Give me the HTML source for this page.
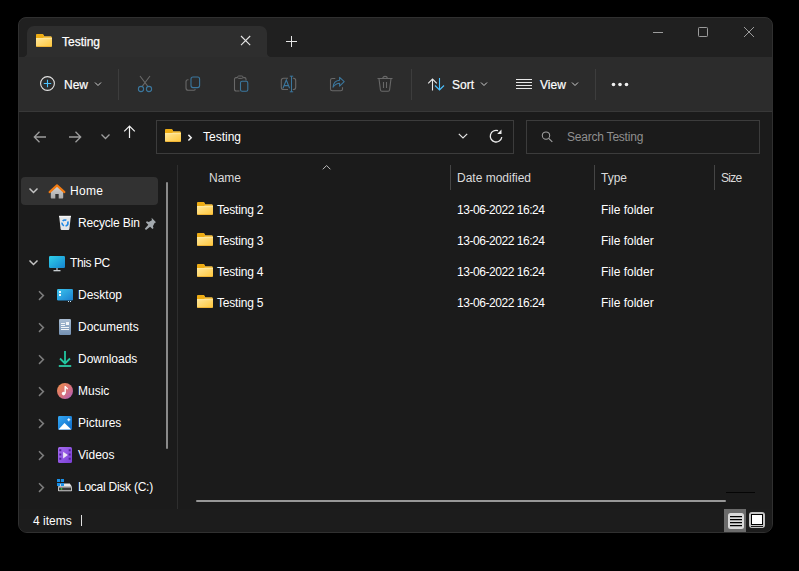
<!DOCTYPE html>
<html><head><meta charset="utf-8">
<style>
*{margin:0;padding:0;box-sizing:border-box}
html,body{width:799px;height:571px;overflow:hidden;background:#000}
body{font-family:"Liberation Sans",sans-serif;font-size:12px;color:#fff;position:relative}
.a{position:absolute}
svg.a{overflow:visible}
.t{position:absolute;white-space:nowrap;line-height:14px}
.nv{color:#fff}
.hd{color:#dcdcdc}
.sb{-webkit-text-stroke:.2px #fff}
</style></head><body>
<svg width="0" height="0" style="position:absolute">
<defs>
<linearGradient id="fg" x1="0" y1="0" x2="1" y2="1">
<stop offset="0" stop-color="#ffe79a"/><stop offset="1" stop-color="#ffc63a"/>
</linearGradient>
<symbol id="folder" viewBox="0 0 16 13">
<path d="M1.6 0h4.5c.5 0 .8.2 1.1.5L8.2 2.2h6.2c.9 0 1.6.7 1.6 1.6V6H0V1.6C0 .7.7 0 1.6 0z" fill="#f6c244"/>
<path d="M1.6 0h4.5c.5 0 .8.2 1.1.5L8.2 2.2 7 4.2H0V1.6C0 .7.7 0 1.6 0z" fill="#eeac12"/>
<path d="M0 4.2h16v7.2c0 .9-.7 1.6-1.6 1.6H1.6C.7 13 0 12.3 0 11.4z" fill="url(#fg)"/>
<path d="M0 4.2h16v.9H0z" fill="#fff0b8" opacity=".75"/>
<path d="M.2 12.1h15.6c-.3.6-.8.9-1.4.9H1.6c-.6 0-1.1-.3-1.4-.9z" fill="#f0b435"/>
</symbol>
</defs>
</svg>

<!-- window -->
<div class="a" style="left:18px;top:17px;width:755px;height:516px;border-radius:8px 8px 9px 9px;background:#202020;border:1px solid #303030"></div>
<!-- tab -->
<div class="a" style="left:27px;top:26px;width:240px;height:31px;background:#2e2e2e;border-radius:7px 7px 0 0"></div>
<div class="a" style="left:23px;top:53px;width:4px;height:4px;background:radial-gradient(circle at 0 0,#202020 3.6px,#2e2e2e 4.4px)"></div>
<div class="a" style="left:267px;top:53px;width:4px;height:4px;background:radial-gradient(circle at 100% 0,#202020 3.6px,#2e2e2e 4.4px)"></div>
<!-- command bar -->
<div class="a" style="left:19px;top:57px;width:753px;height:54px;background:#2c2c2c"></div>
<div class="a" style="left:19px;top:111px;width:753px;height:1px;background:#383838"></div>
<!-- main content -->
<div class="a" style="left:19px;top:112px;width:753px;height:397px;background:#1b1b1b"></div>
<!-- status bar -->
<div class="a" style="left:19px;top:509px;width:753px;height:23px;background:#1c1c1c;border-radius:0 0 8px 8px"></div>

<!-- ===== title bar ===== -->
<svg class="a" style="left:36px;top:34px" width="16" height="13"><use href="#folder"/></svg>
<div class="t" style="left:62px;top:35px;-webkit-text-stroke:.25px #fff">Testing</div>
<svg class="a" style="left:240px;top:35px" width="12" height="12"><path d="M1 1l9.2 9.2M10.2 1L1 10.2" stroke="#e6e6e6" stroke-width="1.1"/></svg>
<svg class="a" style="left:286px;top:36px" width="12" height="12"><path d="M5.5 0v11M0 5.5h11" stroke="#e6e6e6" stroke-width="1"/></svg>
<!-- window controls -->
<svg class="a" style="left:652px;top:26px" width="12" height="12"><path d="M1 6.5h10" stroke="#9c9c9c" stroke-width="1"/></svg>
<svg class="a" style="left:697px;top:26px" width="12" height="12"><rect x="1.5" y="1.5" width="9" height="9" rx=".8" fill="none" stroke="#9c9c9c" stroke-width="1"/></svg>
<svg class="a" style="left:743px;top:26px" width="12" height="12"><path d="M1 1l10 10M11 1L1 11" stroke="#9c9c9c" stroke-width="1"/></svg>

<!-- ===== command bar ===== -->
<svg class="a" style="left:39px;top:75px" width="17" height="17"><circle cx="8.5" cy="8.5" r="6.9" fill="none" stroke="#e4e4e4" stroke-width="1.1"/><path d="M8.5 4.8v7.4M4.8 8.5h7.4" stroke="#4cc2ff" stroke-width="1.1"/></svg>
<div class="t sb" style="left:64px;top:78px">New</div>
<svg class="a" style="left:94px;top:81px" width="8" height="6"><path d="M1 1.5l3 3 3-3" fill="none" stroke="#cfcfcf" stroke-width="1"/></svg>
<div class="a" style="left:118px;top:69px;width:1px;height:31px;background:#3d3d3d"></div>
<!-- cut -->
<svg class="a" style="left:136px;top:75px" width="18" height="18"><path d="M4 1l8.2 10.8M14 1L5.8 11.8" stroke="#686868" stroke-width="1.1" fill="none"/><circle cx="5" cy="14" r="2.6" fill="none" stroke="#3b779e" stroke-width="1.1"/><circle cx="13" cy="14" r="2.6" fill="none" stroke="#3b779e" stroke-width="1.1"/></svg>
<!-- copy -->
<svg class="a" style="left:184px;top:75px" width="18" height="18"><path d="M4.5 4.8H4c-1 0-2 .9-2 2V13c0 1.3 1 2.3 2.3 2.3h5.5c.8 0 1.4-.5 1.6-1" fill="none" stroke="#686868" stroke-width="1.1"/><rect x="7" y="2" width="8.6" height="10.6" rx="2" fill="none" stroke="#3b779e" stroke-width="1.1"/></svg>
<!-- paste -->
<svg class="a" style="left:232px;top:75px" width="18" height="18"><path d="M7.5 16H4.2C3 16 2.5 15.3 2.5 14.3V4.2C2.5 3.2 3.2 2.6 4 2.6h1.3M11.2 2.6h1.2c.9 0 1.6.6 1.6 1.5v1.3" fill="none" stroke="#686868" stroke-width="1.1"/><path d="M5.5 2.2c0-.7.5-1.2 1.2-1.2h3.2c.7 0 1.2.5 1.2 1.2s-.5 1.2-1.2 1.2H6.7c-.7 0-1.2-.5-1.2-1.2z" fill="none" stroke="#686868" stroke-width="1"/><rect x="8.5" y="6.3" width="7.3" height="10" rx="1.6" fill="none" stroke="#3b779e" stroke-width="1.1"/></svg>
<!-- rename -->
<svg class="a" style="left:280px;top:75px" width="18" height="18"><path d="M8 14.5H3.6C2.2 14.5 1.3 13.5 1.3 12.2V5.5C1.3 4.2 2.2 3.2 3.6 3.2H8M12.8 3.2h.6c1.3 0 2.3 1 2.3 2.3v6.7c0 1.3-1 2.3-2.3 2.3h-.6" fill="none" stroke="#686868" stroke-width="1.1"/><path d="M3 13.3L6.3 5l3.3 8.3M4.2 10.6h4.2" fill="none" stroke="#3b779e" stroke-width="1.05"/><path d="M11.5 1.2v15.6M9.8 1.2h3.4M9.8 16.8h3.4" fill="none" stroke="#3b779e" stroke-width="1"/></svg>
<!-- share -->
<svg class="a" style="left:328px;top:75px" width="18" height="18"><path d="M7.3 3.5H4.3c-1.1 0-1.8.7-1.8 1.8v8.6c0 1.1.7 1.8 1.8 1.8h8.4c1.1 0 1.8-.7 1.8-1.8v-1.6" fill="none" stroke="#686868" stroke-width="1.1"/><path d="M5 12.2C5.4 8 8 5.6 11.6 5.3V2.3l4.6 4.4-4.6 4.5V8.3C9 8.3 6.8 9.8 5 12.2z" fill="none" stroke="#3b779e" stroke-width="1.05" stroke-linejoin="round"/></svg>
<!-- delete -->
<svg class="a" style="left:376px;top:75px" width="18" height="18"><path d="M1.5 3.5h15M6.8 3.3c0-1 .9-1.9 2.2-1.9s2.2.9 2.2 1.9M3 3.8l1.4 11c.1.8.7 1.4 1.5 1.4h6.2c.8 0 1.4-.6 1.5-1.4l1.4-11M7.5 7v6M10.5 7v6" fill="none" stroke="#686868" stroke-width="1.1"/></svg>
<div class="a" style="left:411px;top:69px;width:1px;height:31px;background:#3d3d3d"></div>
<!-- sort -->
<svg class="a" style="left:426px;top:75px" width="20" height="18"><path d="M6.5 15.5V4M2.2 8.3l4.3-4.3 4.3 4.3" fill="none" stroke="#e8e8e8" stroke-width="1.1"/><path d="M13.5 3v11.8M9 10.5l4.5 4.5 4.5-4.5" fill="none" stroke="#4cc2ff" stroke-width="1.1"/></svg>
<div class="t sb" style="left:452px;top:78px">Sort</div>
<svg class="a" style="left:480px;top:81px" width="8" height="6"><path d="M1 1.5l3 3 3-3" fill="none" stroke="#cfcfcf" stroke-width="1"/></svg>
<!-- view -->
<svg class="a" style="left:515px;top:77px" width="18" height="14"><path d="M1 2.5h16M1 5.5h16M1 8.5h16M1 11.5h16" stroke="#e8e8e8" stroke-width="1"/></svg>
<div class="t sb" style="left:540px;top:78px">View</div>
<svg class="a" style="left:571px;top:81px" width="8" height="6"><path d="M1 1.5l3 3 3-3" fill="none" stroke="#cfcfcf" stroke-width="1"/></svg>
<div class="a" style="left:595px;top:69px;width:1px;height:31px;background:#3d3d3d"></div>
<!-- more -->
<svg class="a" style="left:610px;top:80px" width="20" height="8"><circle cx="3.5" cy="4.5" r="1.8" fill="#f0f0f0"/><circle cx="10" cy="4.5" r="1.8" fill="#f0f0f0"/><circle cx="16.5" cy="4.5" r="1.8" fill="#f0f0f0"/></svg>

<!-- ===== nav row ===== -->
<svg class="a" style="left:32px;top:129px" width="16" height="16"><path d="M14 8H2.5M7.5 2.8L2.3 8l5.2 5.2" fill="none" stroke="#9d9d9d" stroke-width="1.3"/></svg>
<svg class="a" style="left:67px;top:129px" width="16" height="16"><path d="M2 8h11.5M8.5 2.8L13.7 8l-5.2 5.2" fill="none" stroke="#9d9d9d" stroke-width="1.3"/></svg>
<svg class="a" style="left:100px;top:132px" width="12" height="9"><path d="M1.5 2.5l4 4 4-4" fill="none" stroke="#9d9d9d" stroke-width="1.3"/></svg>
<svg class="a" style="left:122px;top:124px" width="16" height="16"><path d="M7.5 14V2.5M2.2 7.3L7.5 2l5.3 5.3" fill="none" stroke="#f2f2f2" stroke-width="1.2"/></svg>
<!-- address box -->
<div class="a" style="left:156px;top:120px;width:358px;height:34px;border:1px solid #3c3c3c;background:#1b1b1b"></div>
<svg class="a" style="left:165px;top:129px" width="16" height="13"><use href="#folder"/></svg>
<svg class="a" style="left:186px;top:133px" width="8" height="9"><path d="M2.4 1.9l2.8 2.8-2.8 2.8" fill="none" stroke="#f0f0f0" stroke-width="1.5"/></svg>
<div class="t" style="left:203px;top:130px">Testing</div>
<svg class="a" style="left:457px;top:132px" width="12" height="8"><path d="M1.8 1.8l4.2 4.2 4.2-4.2" fill="none" stroke="#e6e6e6" stroke-width="1.2"/></svg>
<svg class="a" style="left:488px;top:128px" width="16" height="16"><path d="M13.8 9.2A5.8 5.8 0 1 1 10 2.7" fill="none" stroke="#ececec" stroke-width="1.3"/><path d="M13.5 1.6v4.3H9.2z" fill="#ececec"/></svg>
<!-- search box -->
<div class="a" style="left:526px;top:120px;width:234px;height:34px;border:1px solid #3c3c3c;background:#1b1b1b"></div>
<svg class="a" style="left:540px;top:130px" width="14" height="14"><circle cx="6" cy="5.6" r="3.7" fill="none" stroke="#a0a0a0" stroke-width="1.05"/><path d="M8.7 8.3l3.6 3.6" stroke="#a0a0a0" stroke-width="1.1"/></svg>
<div class="t" style="left:567px;top:130px;color:#8f8f8f;letter-spacing:-.22px">Search Testing</div>

<!-- ===== navigation pane ===== -->
<div class="a" style="left:21px;top:177px;width:137px;height:28px;background:#323232;border-radius:4px"></div>
<div class="a" style="left:166px;top:182px;width:2px;height:267px;background:#8a8a8a;border-radius:1px"></div>
<div class="a" style="left:177px;top:165px;width:1px;height:344px;background:#2e2e2e"></div>

<svg class="a" style="left:28px;top:186px" width="12" height="9"><path d="M1.5 2.5l4 4 4-4" fill="none" stroke="#c4c4c4" stroke-width="1.5"/></svg>
<!-- home icon -->
<svg class="a" style="left:48px;top:183px" width="18" height="17"><defs><linearGradient id="hg" x1="0" y1="0" x2="0" y2="1"><stop offset="0" stop-color="#d4d4d4"/><stop offset="1" stop-color="#a8a8a8"/></linearGradient></defs><path d="M2.8 8.3v6.2c0 .7.4 1 1 1h3.5v-4.6h3.4v4.6h3.5c.6 0 1-.3 1-1V8.3L9 3z" fill="url(#hg)"/><path d="M1.6 9.1L9 2.4l7.4 6.7" fill="none" stroke="#f27b12" stroke-width="2.1" stroke-linejoin="round" stroke-linecap="round"/></svg>
<div class="t" style="left:70px;top:184px;letter-spacing:.3px">Home</div>

<!-- recycle bin -->
<svg class="a" style="left:58px;top:215px" width="14" height="16"><path d="M1.2 1.5h11.6l-1.4 12.6c-.1.6-.5 1-1.1 1H3.7c-.6 0-1-.4-1.1-1z" fill="#e4e6e8"/><path d="M1 1.5h12" stroke="#f6f6f6" stroke-width="1.4"/><circle cx="7" cy="8" r="3" fill="none" stroke="#1e88e5" stroke-width="1.6" stroke-dasharray="4 1.6"/></svg>
<div class="t" style="left:78px;top:216px;letter-spacing:-.15px">Recycle Bin</div>
<svg class="a" style="left:143px;top:217px" width="14" height="13"><path d="M8.6 0.8l4.4 4.4-1.4 .9-1.7 3.1 .6 1.9-1 1-2.4-2.4L3 13 1.8 11.8 5.3 7.7 2.9 5.3l1-1 1.9.6 3.1-1.7z" fill="#a3a9ae"/></svg>

<svg class="a" style="left:28px;top:258px" width="12" height="9"><path d="M1.5 2.5l4 4 4-4" fill="none" stroke="#c4c4c4" stroke-width="1.5"/></svg>
<!-- monitor -->
<svg class="a" style="left:48px;top:255px" width="18" height="17"><defs><linearGradient id="mg" x1="0" y1="0" x2="1" y2="1"><stop offset="0" stop-color="#2fd0ea"/><stop offset="1" stop-color="#1584cf"/></linearGradient></defs><rect x="1" y="1" width="16" height="12" rx="1.2" fill="url(#mg)"/><path d="M8.2 13h1.6v2.2H8.2z" fill="#9aa4ac"/><path d="M5.5 15h7v1.3h-7z" fill="#c7ccd0"/></svg>
<div class="t" style="left:70px;top:256px;letter-spacing:-.4px">This PC</div>

<svg class="a" style="left:36px;top:289px" width="9" height="12"><path d="M3 2.3l4.4 4.3-4.4 4.3" fill="none" stroke="#7c7c7c" stroke-width="1.5"/></svg>
<!-- desktop -->
<svg class="a" style="left:56px;top:288px" width="18" height="14"><defs><linearGradient id="dg" x1="0" y1="0" x2="1" y2="1"><stop offset="0" stop-color="#3cc4ec"/><stop offset="1" stop-color="#1a7fd0"/></linearGradient></defs><rect x="1" y="1" width="16" height="11.5" rx="1.3" fill="url(#dg)"/><rect x="3" y="3" width="2" height="2" fill="#f0f9ff"/><rect x="3" y="6" width="2" height="2" fill="#f0f9ff"/><rect x="12" y="13" width="1" height="1" fill="#c8e6f6"/><rect x="14" y="13" width="1" height="1" fill="#c8e6f6"/></svg>
<div class="t" style="left:78px;top:288px">Desktop</div>

<svg class="a" style="left:36px;top:321px" width="9" height="12"><path d="M3 2.3l4.4 4.3-4.4 4.3" fill="none" stroke="#7c7c7c" stroke-width="1.5"/></svg>
<!-- documents -->
<svg class="a" style="left:58px;top:318px" width="14" height="18"><defs><linearGradient id="docg" x1="0" y1="0" x2="0" y2="1"><stop offset="0" stop-color="#a9bdd3"/><stop offset="1" stop-color="#7491b3"/></linearGradient></defs><rect x="1" y="1" width="12" height="16" rx="1.2" fill="url(#docg)"/><path d="M3 5.5h4M3 7.5h4M3 9.5h8M3 11.5h8" stroke="#f2f5f8" stroke-width="1"/><rect x="8" y="4" width="3" height="3" fill="#f2f5f8"/></svg>
<div class="t" style="left:78px;top:320px">Documents</div>

<svg class="a" style="left:36px;top:353px" width="9" height="12"><path d="M3 2.3l4.4 4.3-4.4 4.3" fill="none" stroke="#7c7c7c" stroke-width="1.5"/></svg>
<!-- downloads -->
<svg class="a" style="left:57px;top:350px" width="16" height="18"><path d="M8 1v12.5M3 8.5l5 5 5-5" fill="none" stroke="#22c7a0" stroke-width="1.8"/><path d="M1.8 16h12.4" stroke="#2ccba8" stroke-width="1.8"/></svg>
<div class="t" style="left:78px;top:352px">Downloads</div>

<svg class="a" style="left:36px;top:385px" width="9" height="12"><path d="M3 2.3l4.4 4.3-4.4 4.3" fill="none" stroke="#7c7c7c" stroke-width="1.5"/></svg>
<!-- music -->
<svg class="a" style="left:56px;top:382px" width="18" height="18"><defs><linearGradient id="mug" x1="0" y1="0" x2="1" y2="1"><stop offset="0" stop-color="#f0924a"/><stop offset=".55" stop-color="#d8707a"/><stop offset="1" stop-color="#a95cc8"/></linearGradient></defs><circle cx="9" cy="9" r="8" fill="url(#mug)"/><path d="M9.2 4.2v7" stroke="#fff" stroke-width="1.4"/><path d="M9.2 4.2c.6 1.4 2 1.8 2.4 3" fill="none" stroke="#fff" stroke-width="1.3"/><circle cx="7.6" cy="11.6" r="1.8" fill="#fff"/></svg>
<div class="t" style="left:78px;top:384px">Music</div>

<svg class="a" style="left:36px;top:417px" width="9" height="12"><path d="M3 2.3l4.4 4.3-4.4 4.3" fill="none" stroke="#7c7c7c" stroke-width="1.5"/></svg>
<!-- pictures -->
<svg class="a" style="left:57px;top:415px" width="16" height="16"><defs><linearGradient id="pg" x1="0" y1="0" x2="1" y2="1"><stop offset="0" stop-color="#34a9f5"/><stop offset="1" stop-color="#0d68c6"/></linearGradient></defs><rect x="1" y="1" width="14" height="14" rx="1.4" fill="url(#pg)"/><path d="M1.5 14.5L7.5 8l6.8 6.5z" fill="#fff"/><path d="M11.8 3.2v3M10.3 4.7h3" stroke="#fff" stroke-width="1.1"/></svg>
<div class="t" style="left:78px;top:416px">Pictures</div>

<svg class="a" style="left:36px;top:449px" width="9" height="12"><path d="M3 2.3l4.4 4.3-4.4 4.3" fill="none" stroke="#7c7c7c" stroke-width="1.5"/></svg>
<!-- videos -->
<svg class="a" style="left:57px;top:446px" width="16" height="18"><defs><linearGradient id="vg" x1="0" y1="0" x2="1" y2="1"><stop offset="0" stop-color="#a66cf0"/><stop offset="1" stop-color="#7a3fd4"/></linearGradient></defs><rect x="1" y="1" width="14" height="16" rx="1.5" fill="url(#vg)"/><path d="M2.3 3.3h2v2h-2zM2.3 7.6h2v2h-2zM2.3 11.8h2v2h-2zM11.7 3.3h2v2h-2zM11.7 7.6h2v2h-2zM11.7 11.8h2v2h-2z" fill="#4f2396"/><path d="M6.1 5.8v6.6l4.8-3.3z" fill="#ece6f4"/></svg>
<div class="t" style="left:78px;top:448px">Videos</div>

<svg class="a" style="left:36px;top:481px" width="9" height="12"><path d="M3 2.3l4.4 4.3-4.4 4.3" fill="none" stroke="#7c7c7c" stroke-width="1.5"/></svg>
<!-- local disk -->
<svg class="a" style="left:56px;top:478px" width="18" height="15"><path d="M3.5 5.6h10.3l2.2 3.2H2z" fill="#e6e6e6"/><rect x="2" y="8.7" width="14" height="4.5" rx=".8" fill="#d0d0d0"/><rect x="2.9" y="9.5" width="12.2" height="2.8" fill="#3a3a3a"/><rect x="4.8" y="10.2" width="1.4" height="1.4" fill="#3fe03f"/><path d="M1 1h3.1v3.1H1zM4.9 1H8v3.1H4.9zM1 4.9h3.1V8H1zM4.9 4.9H8V8H4.9z" fill="#1a8fe6"/></svg>
<div class="t" style="left:78px;top:480px;letter-spacing:-.25px">Local Disk (C:)</div>

<!-- ===== file list ===== -->
<svg class="a" style="left:321px;top:164px" width="11" height="7"><path d="M1.8 5.3l3.8-3.8 3.8 3.8" fill="none" stroke="#bcbcbc" stroke-width="1"/></svg>
<div class="t hd" style="left:209px;top:171px">Name</div>
<div class="a" style="left:450px;top:165px;width:1px;height:25px;background:#454545"></div>
<div class="t hd" style="left:457px;top:171px">Date modified</div>
<div class="a" style="left:594px;top:165px;width:1px;height:25px;background:#454545"></div>
<div class="t hd" style="left:601px;top:171px">Type</div>
<div class="a" style="left:714px;top:165px;width:1px;height:25px;background:#454545"></div>
<div class="t hd" style="left:721px;top:171px;letter-spacing:-.7px">Size</div>

<svg class="a" style="left:197px;top:202px" width="16" height="13"><use href="#folder"/></svg>
<div class="t" style="left:217px;top:203px;letter-spacing:-.2px">Testing 2</div>
<div class="t" style="left:457px;top:203px"><span style="letter-spacing:-.45px">13-06-2022 16:24</span></div>
<div class="t" style="left:601px;top:203px">File folder</div>

<svg class="a" style="left:197px;top:233px" width="16" height="13"><use href="#folder"/></svg>
<div class="t" style="left:217px;top:234px;letter-spacing:-.2px">Testing 3</div>
<div class="t" style="left:457px;top:234px"><span style="letter-spacing:-.45px">13-06-2022 16:24</span></div>
<div class="t" style="left:601px;top:234px">File folder</div>

<svg class="a" style="left:197px;top:264px" width="16" height="13"><use href="#folder"/></svg>
<div class="t" style="left:217px;top:265px;letter-spacing:-.2px">Testing 4</div>
<div class="t" style="left:457px;top:265px"><span style="letter-spacing:-.45px">13-06-2022 16:24</span></div>
<div class="t" style="left:601px;top:265px">File folder</div>

<svg class="a" style="left:197px;top:295px" width="16" height="13"><use href="#folder"/></svg>
<div class="t" style="left:217px;top:296px;letter-spacing:-.2px">Testing 5</div>
<div class="t" style="left:457px;top:296px"><span style="letter-spacing:-.45px">13-06-2022 16:24</span></div>
<div class="t" style="left:601px;top:296px">File folder</div>

<!-- horizontal scrollbar -->
<div class="a" style="left:196px;top:500px;width:530px;height:2px;background:#979797;border-radius:1px"></div>
<div class="a" style="left:726px;top:492px;width:29px;height:1px;background:#050505"></div>

<!-- ===== status bar ===== -->
<div class="t" style="left:33px;top:514px">4 items</div>
<div class="a" style="left:81px;top:515px;width:1px;height:11px;background:#e0e0e0"></div>
<!-- view toggles -->
<div class="a" style="left:724px;top:509px;width:22px;height:23px;background:#6b6b6b"></div>
<div class="a" style="left:728px;top:513px;width:16px;height:16px;background:#dadada;border-radius:2.5px"></div>
<svg class="a" style="left:728px;top:513px" width="16" height="16"><path d="M2 3.6h12M2 6.6h12M2 9.6h12M2 12.6h12" stroke="#000" stroke-width="1.4"/></svg>
<div class="a" style="left:749px;top:512px;width:16px;height:16px;background:#c4c4c4;border-radius:3px"></div>
<div class="a" style="left:751px;top:514px;width:12px;height:11px;background:#fff;border:1.5px solid #000"></div>
<div class="a" style="left:751px;top:526px;width:12px;height:1px;background:#1a1a1a"></div>
</body></html>
